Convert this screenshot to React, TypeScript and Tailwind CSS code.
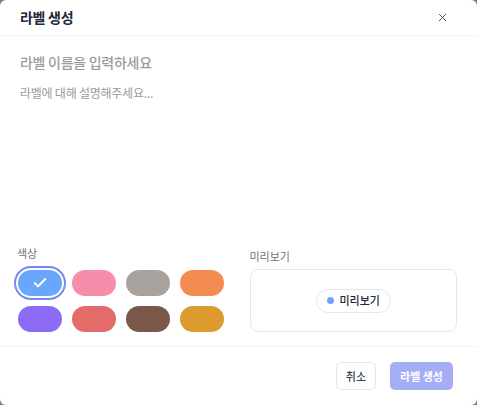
import { X, Check } from 'lucide-react';

const colors = [
  { name: 'blue', bg: 'bg-[#6aa6fc]' },
  { name: 'pink', bg: 'bg-[#f68dab]' },
  { name: 'gray', bg: 'bg-[#a8a29e]' },
  { name: 'orange', bg: 'bg-[#f38c50]' },
  { name: 'purple', bg: 'bg-[#8c6cf6]' },
  { name: 'red', bg: 'bg-[#e56a6a]' },
  { name: 'brown', bg: 'bg-[#7a5849]' },
  { name: 'gold', bg: 'bg-[#dd9b2d]' },
];

export default function App() {
  const selected = 'blue';

  return (
    <div className="w-[477px] h-[405px] bg-[#7d7d7d] font-['Noto_Sans_CJK_KR','Noto_Sans',sans-serif]">
      <div className="w-full h-full bg-white rounded-[6px] flex flex-col overflow-hidden">
        {/* header */}
        <div className="h-[36px] flex items-center justify-between pl-5 pr-[28px] border-b border-gray-100">
          <h2 className="text-[14px] font-semibold text-gray-800 tracking-[-0.02em]">라벨 생성</h2>
          <X className="w-[13px] h-[13px] text-gray-700" strokeWidth={1.6} />
        </div>

        {/* body */}
        <div className="flex-1 flex flex-col">
          <input
            className="mt-[16px] mx-5 h-[20px] text-[14px] font-medium text-gray-800 tracking-[-0.02em] placeholder:text-[#9b9b9b] outline-none"
            placeholder="라벨 이름을 입력하세요"
          />
          <textarea
            className="mt-[11px] mx-5 flex-1 resize-none text-[12px] leading-[20px] text-gray-700 tracking-[-0.02em] placeholder:text-[#9b9b9b] outline-none"
            placeholder="라벨에 대해 설명해주세요..."
          />

          <div className="grid grid-cols-2 gap-6 pl-[18px] pr-5 pb-[14px] items-end">
            <div>
              <div className="text-[11px] text-gray-500 mb-[9px] -ml-[1px]">색상</div>
              <div className="grid grid-cols-4 gap-x-[10px] gap-y-[10px] w-[206px]">
                {colors.map((c) => (
                  <button
                    key={c.name}
                    className={`h-[26px] w-[44px] rounded-full flex items-center justify-center ${c.bg} ${
                      c.name === selected ? 'ring-2 ring-[#7b86f0] ring-offset-2' : ''
                    }`}
                  >
                    {c.name === selected && <Check className="w-[16px] h-[16px] text-white" strokeWidth={3} />}
                  </button>
                ))}
              </div>
            </div>
            <div>
              <div className="text-[11px] text-gray-500 mb-[5px]">미리보기</div>
              <div className="h-[63px] border border-gray-200 rounded-lg flex items-center justify-center">
                <span className="flex items-center gap-[6px] h-[24px] px-[10px] rounded-full border border-gray-200">
                  <span className="w-[7px] h-[7px] rounded-full bg-[#6aa6fc]" />
                  <span className="text-[11px] font-medium text-gray-800">미리보기</span>
                </span>
              </div>
            </div>
          </div>
        </div>

        {/* footer */}
        <div className="border-t border-gray-100 flex justify-end gap-[14px] pt-[15px] pb-[15px] pr-6">
          <button className="h-[28px] px-[9px] text-[11px] font-medium text-gray-700 border border-gray-200 rounded-[5px]">취소</button>
          <button className="h-[28px] px-[10px] text-[11px] font-bold text-white bg-[#a5aef5] rounded-[5px]">라벨 생성</button>
        </div>
      </div>
    </div>
  );
}
